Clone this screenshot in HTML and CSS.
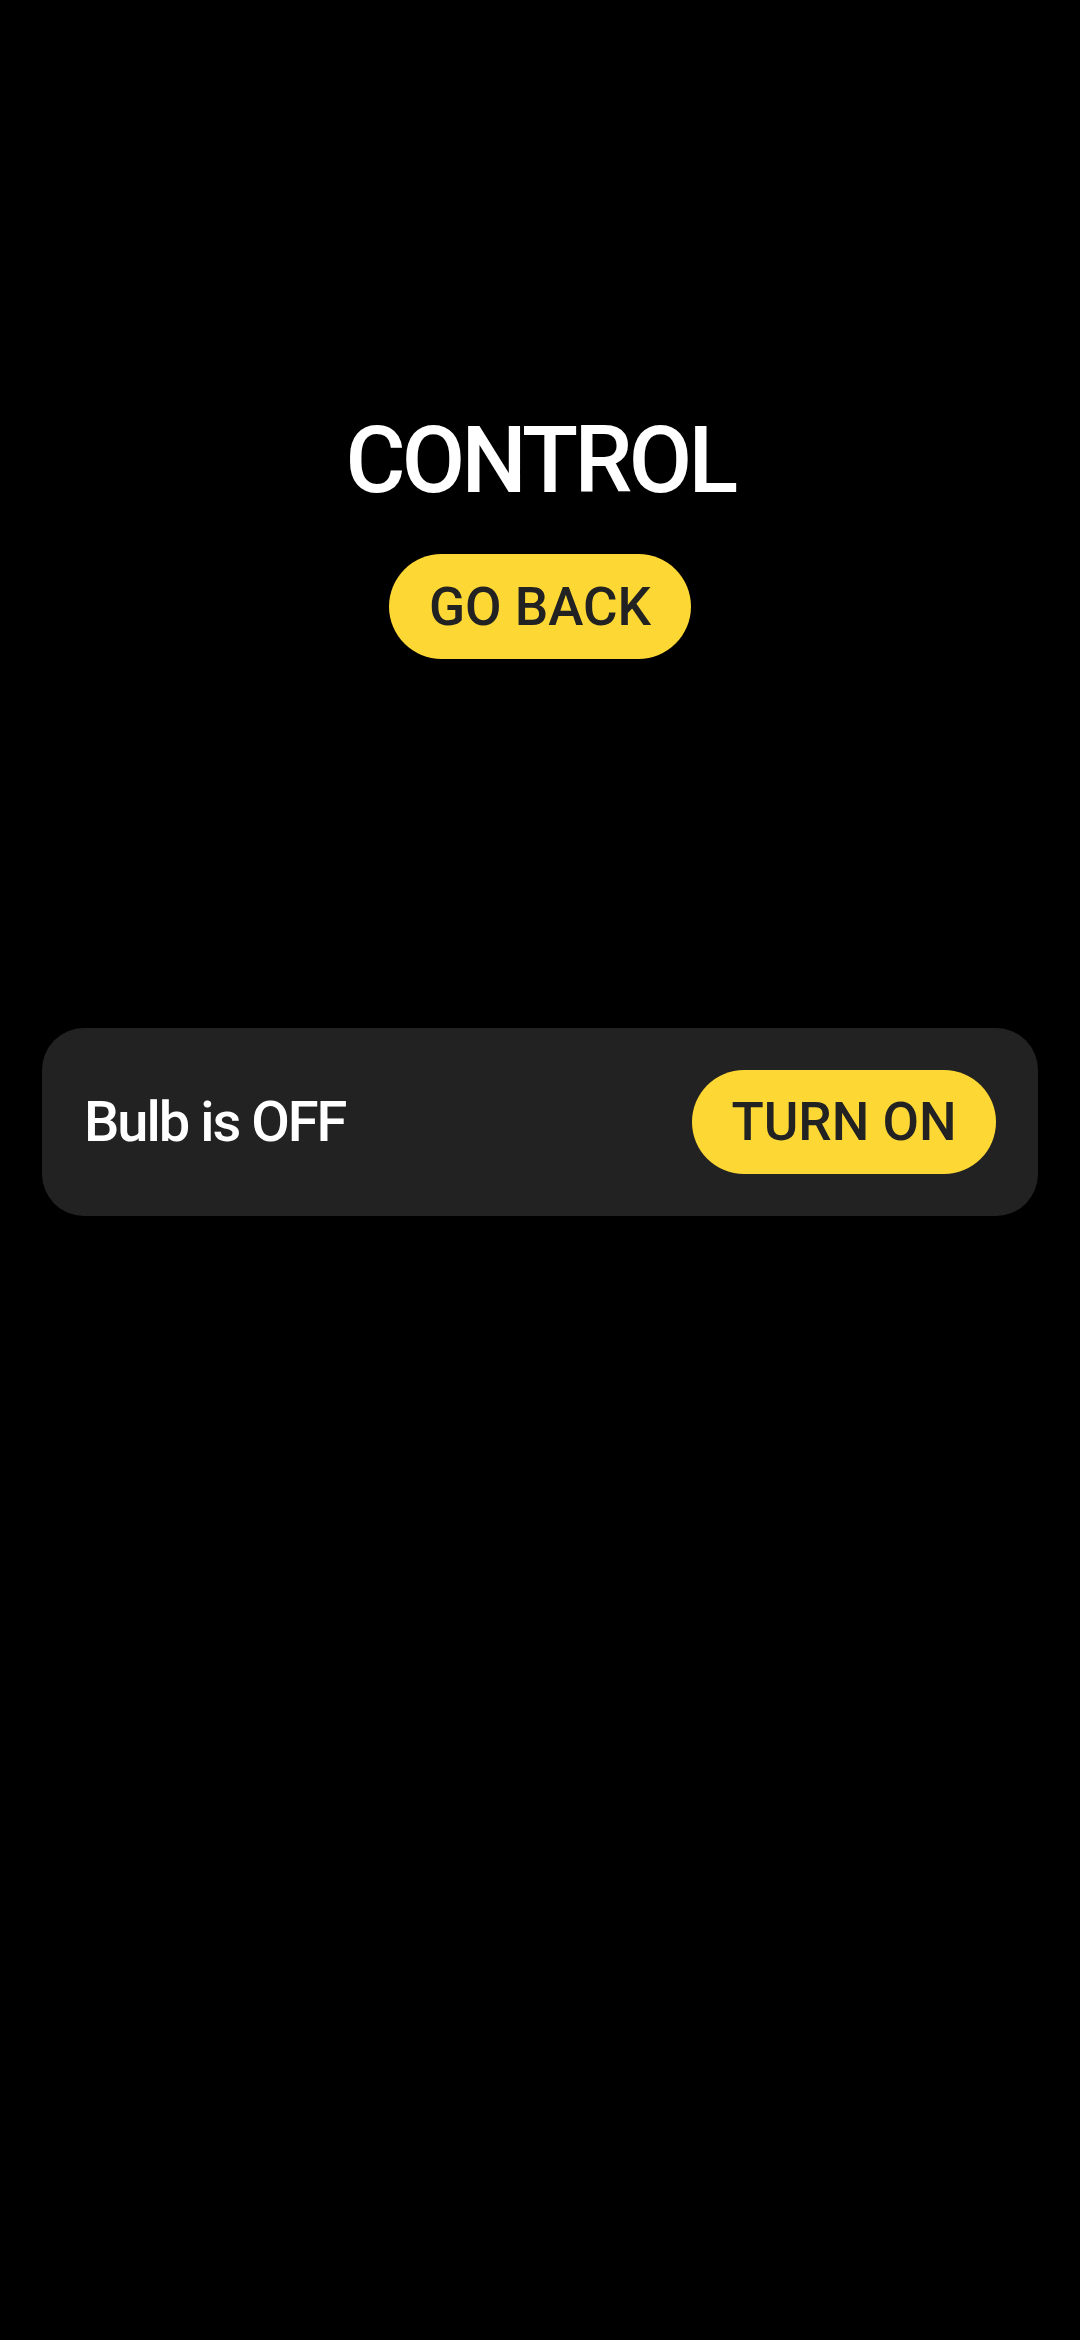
FILE: index.html
```html
<!DOCTYPE html>
<html>
<head>
<meta charset="utf-8">
<link rel="stylesheet" href="styles.css">
</head>
<body>
<main class="screen">
  <h1 class="title">CONTROL</h1>
  <button class="pill back">GO BACK</button>
  <section class="card">
    <span class="status">Bulb is OFF</span>
    <button class="pill toggle">TURN ON</button>
  </section>
</main>
</body>
</html>
```
FILE: styles.css
```css
html, body {
  margin: 0;
  padding: 0;
  background: #000;
}
body {
  width: 1080px;
  height: 2340px;
  font-family: Roboto, "Noto Sans", sans-serif;
}
.screen {
  display: flex;
  flex-direction: column;
  align-items: center;
  padding-top: 407px;
}
.title {
  margin: 0;
  font-size: 92px;
  font-weight: 500;
  line-height: 108px;
  letter-spacing: -3.6px;
  color: #fff;
  white-space: nowrap;
}
.pill {
  border: none;
  background: #FDD835;
  color: #222;
  font-family: Roboto, "Noto Sans", sans-serif;
  font-weight: 500;
  font-size: 53px;
  line-height: 62px;
  height: 105px;
  border-radius: 53px;
  padding: 0 42px;
  white-space: nowrap;
  display: flex;
  align-items: center;
  justify-content: center;
}
.back {
  margin-top: 39px;
  width: 302px;
}
.toggle {
  width: 304px;
  height: 104px;
}
.card {
  margin-top: 369px;
  width: 996px;
  box-sizing: border-box;
  background: #222;
  border-radius: 42px;
  padding: 42px;
  display: flex;
  align-items: center;
  justify-content: space-between;
}
.status {
  color: #fff;
  font-size: 56px;
  font-weight: 500;
  letter-spacing: -2px;
  white-space: nowrap;
}
```
